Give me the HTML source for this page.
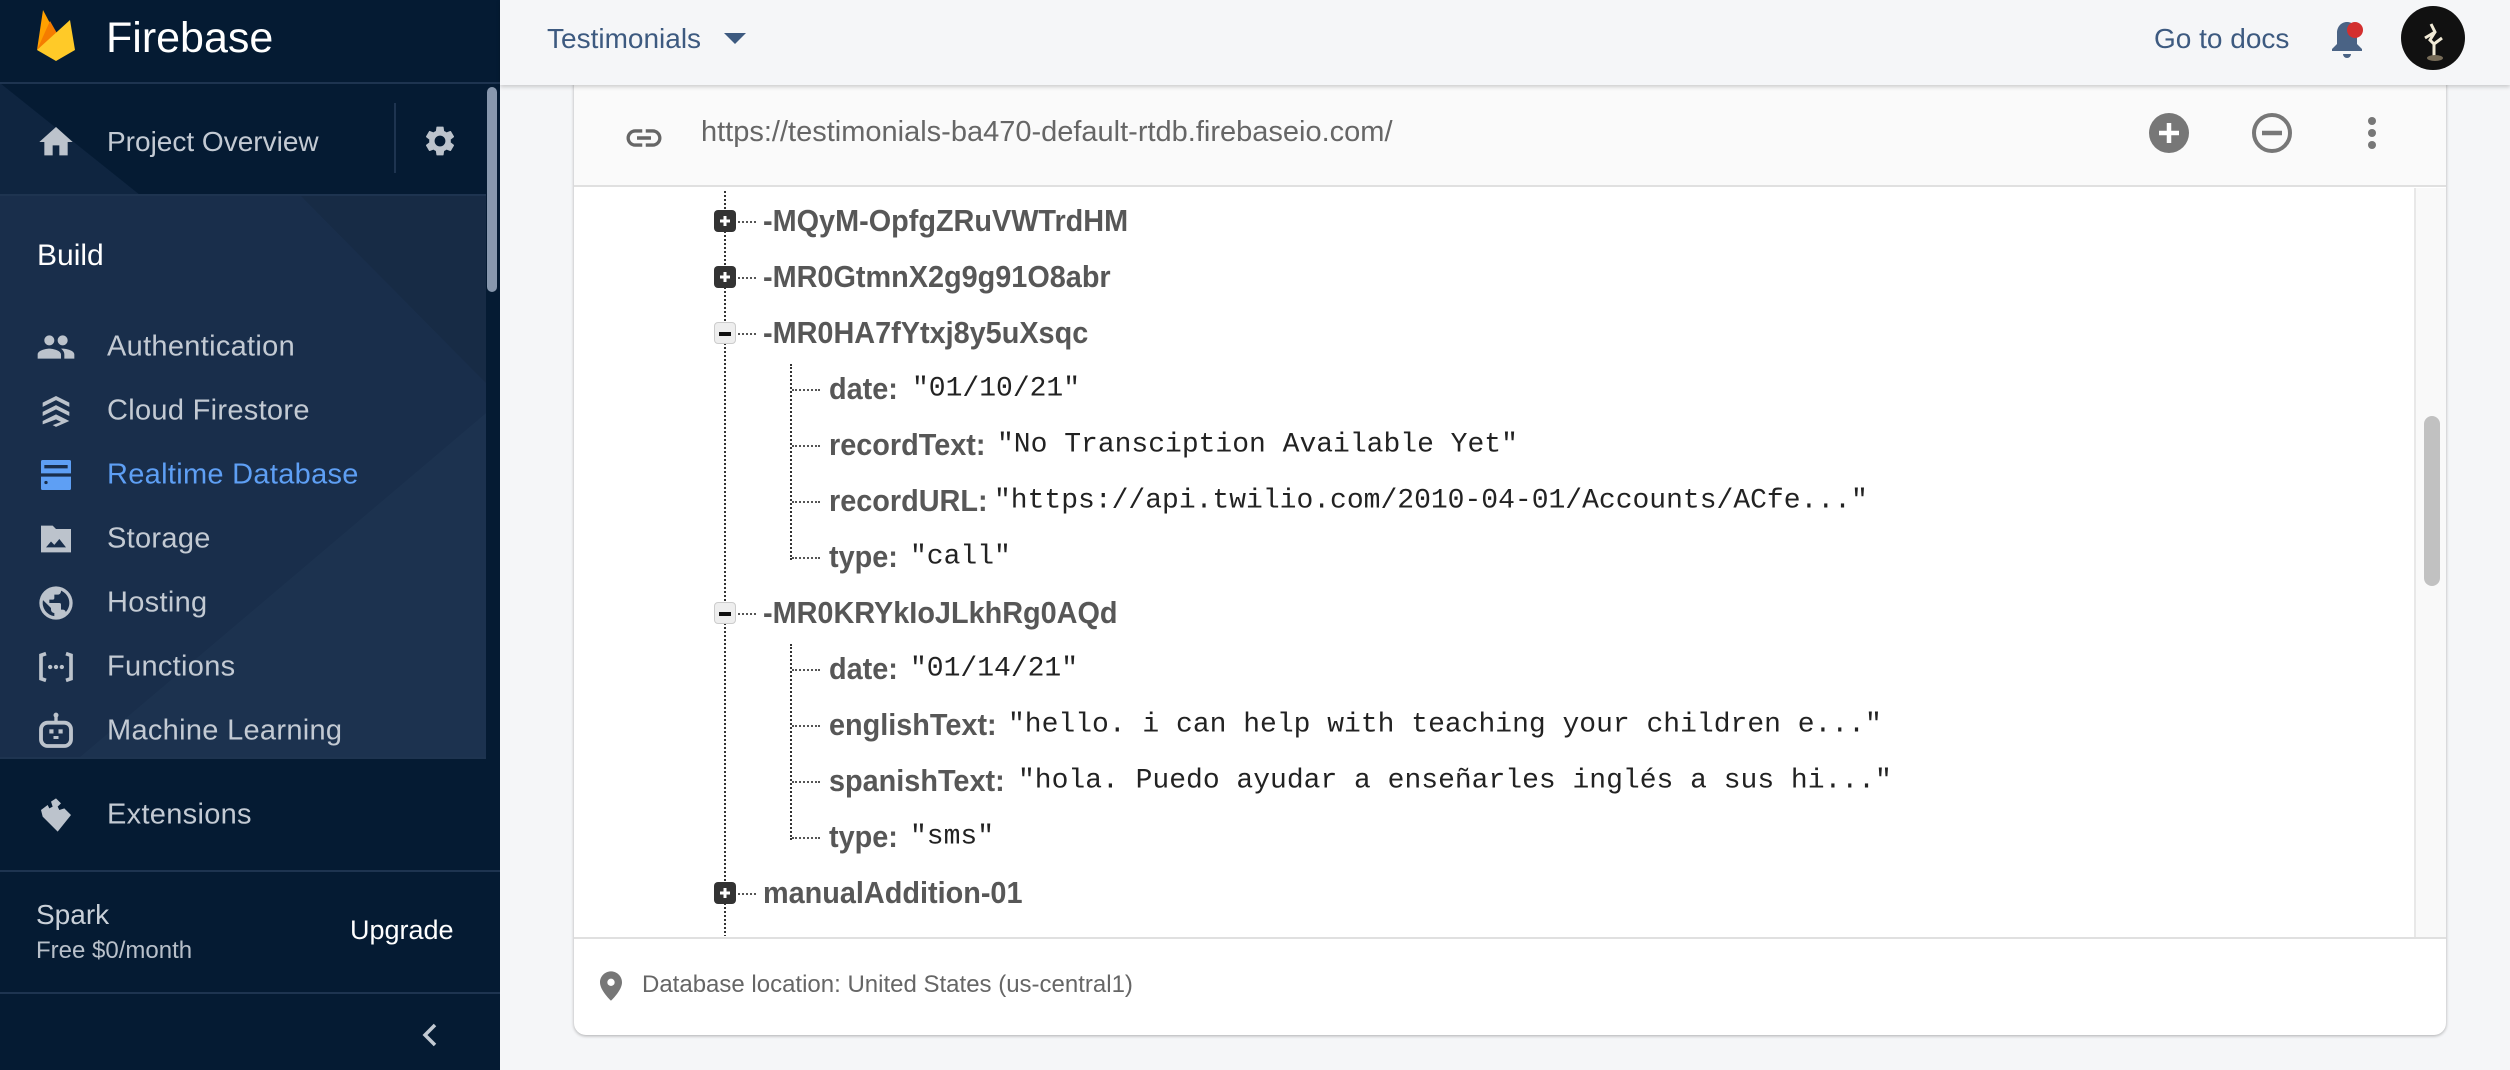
<!DOCTYPE html>
<html><head><meta charset="utf-8">
<style>
*{margin:0;padding:0;box-sizing:border-box}
body{width:2510px;height:1070px;overflow:hidden;background:#f5f6f8;font-family:"Liberation Sans",sans-serif;position:relative}
.abs{position:absolute}
#side{left:0;top:0;width:500px;height:1070px;background:#051b33;overflow:hidden}
.nav{position:absolute;left:107px;font-size:29px;color:#c3cad3;transform:translateY(-50%);white-space:nowrap;letter-spacing:0.3px}
.ic{position:absolute;left:36px;width:40px;height:40px;transform:translateY(-50%)}
.hl{position:absolute;left:0;height:2px;background:#1e3450}
.key{position:absolute;font-weight:bold;font-size:31px;color:#575757;transform:translateY(-50%) scaleX(0.93);transform-origin:left center;white-space:nowrap}
.val{position:absolute;font-family:"Liberation Mono",monospace;font-size:28px;color:#222;transform:translateY(-50%);white-space:pre}
.box{position:absolute;width:22px;height:22px;border-radius:4px;transform:translate(-50%,-50%)}
.plus{background:#333}
.minus{background:#eee;border:1.5px solid #ccc}
.hd{position:absolute;border-top:2px dotted #555;height:0}
.vd{position:absolute;border-left:2px dotted #333;width:0}
</style></head><body>

<div id="side" class="abs">
  <svg class="abs" style="left:0;top:83px" width="486" height="674">
    <rect x="0" y="112" width="486" height="562" fill="#172b45"/>
    <polygon points="0,0 0,0 140,112 0,112" fill="#0f2540"/>
    <polygon points="0,112 300,112 486,300 486,674 0,674" fill="#1c3250" opacity="0.55"/>
    <polygon points="486,330 486,674 80,674" fill="#1e3552" opacity="0.6"/>
  </svg>
  <div class="hl" style="top:82px;width:500px"></div>
  <div class="hl" style="top:194px;width:486px"></div>
  <div class="hl" style="top:757px;width:486px"></div>
  <div class="hl" style="top:870px;width:500px"></div>
  <div class="hl" style="top:992px;width:500px"></div>
  <svg class="abs" style="left:36px;top:10px" width="40" height="52" viewBox="0 0 40 52">
    <path d="M1 40 L7 0 L16 17 Z" fill="#ffa000"/>
    <path d="M1 40 L14 11 L22 25 Z" fill="#f57c00"/>
    <path d="M1 40 L34 10 L39 40 L20 51 Z" fill="#ffca28"/>
  </svg>
  <div class="abs" style="left:106px;top:14px;font-size:43px;color:#fff">Firebase</div>
  <svg class="ic" style="top:142px" viewBox="0 0 24 24"><path d="M10 20v-6h4v6h5v-8h3L12 3 2 12h3v8z" fill="#bcc3cc"/></svg>
  <div class="nav" style="top:142px;font-size:28px;letter-spacing:0">Project Overview</div>
  <div class="abs" style="left:394px;top:103px;width:2px;height:70px;background:#1e3450"></div>
  <svg class="abs" style="left:422px;top:123px" width="36" height="36" viewBox="0 0 24 24"><path fill="#bcc3cc" d="M19.14 12.94c.04-.3.06-.61.06-.94 0-.32-.02-.64-.07-.94l2.03-1.58a.49.49 0 0 0 .12-.61l-1.920-3.32a.49.49 0 0 0-.59-.22l-2.39.96c-.5-.38-1.03-.7-1.62-.94l-.36-2.54a.48.48 0 0 0-.48-.41h-3.84c-.24 0-.43.17-.47.41l-.36 2.54c-.59.24-1.13.57-1.62.94l-2.39-.96a.48.48 0 0 0-.59.22L2.74 8.87c-.12.21-.08.47.12.61l2.03 1.58c-.05.3-.09.63-.09.94s.02.64.07.94l-2.03 1.58a.49.49 0 0 0-.12.61l1.92 3.32c.12.22.37.29.59.22l2.39-.96c.5.38 1.030.7 1.62.94l.36 2.54c.05.24.24.41.48.41h3.84c.24 0 .44-.17.47-.41l.36-2.54c.59-.24 1.13-.56 1.62-.94l2.39.96c.22.08.47 0 .59-.22l1.92-3.32c.12-.22.07-.47-.12-.61l-2.01-1.58zM12 15.6A3.6 3.6 0 1 1 12 8.4a3.6 3.6 0 0 1 0 7.2z"/></svg>
  <div class="abs" style="left:487px;top:87px;width:10px;height:205px;border-radius:5px;background:#8797ad"></div>
  <div class="abs" style="left:37px;top:239px;font-size:30px;color:#fff">Build</div>
  <svg class="ic" style="top:347px" viewBox="0 0 24 24"><path fill="#bcc3cc" d="M16 11c1.66 0 2.99-1.34 2.99-3S17.66 5 16 5s-3 1.34-3 3 1.34 3 3 3zm-8 0c1.66 0 2.99-1.34 2.99-3S9.66 5 8 5 5 6.34 5 8s1.34 3 3 3zm0 2c-2.33 0-7 1.17-7 3.5V19h14v-2.5c0-2.33-4.67-3.5-7-3.5zm8 0c-.29 0-.62.02-.97.05 1.160.84 1.97 1.97 1.97 3.45V19h6v-2.5c0-2.33-4.67-3.5-7-3.5z"/></svg>
  <div class="nav" style="top:347px">Authentication</div>
  <svg class="ic" style="top:411px" viewBox="0 0 24 24"><path fill="#bcc3cc" d="M12 3l8 4v2.5l-8-4-8 4V7zM12 8.5l8 4V15l-8-4-8 4v-2.5zM4 18l8-4 8 4-8 3.5-2-1 5-2-3-1.5L4 20z"/></svg>
  <div class="nav" style="top:411px">Cloud Firestore</div>
  <svg class="ic" style="top:475px" viewBox="0 0 24 24"><path fill="#5e9ff4" d="M4 3h16a1 1 0 0 1 1 1v7H3V4a1 1 0 0 1 1-1zm1 3v2h14V6zM3 13h18v7a1 1 0 0 1-1 1H4a1 1 0 0 1-1-1zm3 2.5a1 1 0 1 0 0 2 1 1 0 0 0 0-2z"/></svg>
  <div class="nav" style="top:475px;color:#5e9ff4">Realtime Database</div>
  <svg class="ic" style="top:539px" viewBox="0 0 24 24"><path fill="#bcc3cc" d="M3 4h7l2 2h9v14H3zM6 17h12l-4-5-3 3.5-2-2z"/></svg>
  <div class="nav" style="top:539px">Storage</div>
  <svg class="ic" style="top:603px" viewBox="0 0 24 24"><path fill="#bcc3cc" d="M12 2a10 10 0 1 0 0 20 10 10 0 0 0 0-20zm-1 17.9A8 8 0 0 1 4.2 10.3L9 15v1a2 2 0 0 0 2 2zm6.9-2.5A2 2 0 0 0 16 16h-1v-3a1 1 0 0 0-1-1H8v-2h2a1 1 0 0 0 1-1V7h2a2 2 0 0 0 2-2v-.4a8 8 0 0 1 2.9 12.8z"/></svg>
  <div class="nav" style="top:603px">Hosting</div>
  <svg class="ic" style="top:667px" viewBox="0 0 24 24"><path fill="none" stroke="#bcc3cc" stroke-width="2.2" d="M6 4L3 5v14l3 1M18 4l3 1v14l-3 1"/><circle cx="8.5" cy="12" r="1.3" fill="#bcc3cc"/><circle cx="12" cy="12" r="1.3" fill="#bcc3cc"/><circle cx="15.5" cy="12" r="1.3" fill="#bcc3cc"/></svg>
  <div class="nav" style="top:667px">Functions</div>
  <svg class="ic" style="top:731px" viewBox="0 0 24 24"><rect x="3" y="7" width="18" height="14" rx="4" fill="none" stroke="#bcc3cc" stroke-width="2.3"/><path d="M12 2v5" stroke="#bcc3cc" stroke-width="2"/><circle cx="12" cy="2.5" r="1.5" fill="#bcc3cc"/><rect x="8" y="11" width="2.5" height="2.5" fill="#bcc3cc"/><rect x="13.5" y="11" width="2.5" height="2.5" fill="#bcc3cc"/><rect x="10.5" y="15" width="3" height="1.8" fill="#bcc3cc"/></svg>
  <div class="nav" style="top:731px">Machine Learning</div>
  <svg class="ic" style="top:815px" viewBox="0 0 24 24"><path fill="#bcc3cc" d="M3 9l4-3 1 2 2-1-1-3 3-2 3 3-2 2 1 2 3-1 4 4-8 10-9-9z"/></svg>
  <div class="nav" style="top:815px">Extensions</div>
  <div class="abs" style="left:36px;top:899px;font-size:28px;color:#c9d0d8">Spark</div>
  <div class="abs" style="left:36px;top:937px;font-size:24px;color:#b8c0ca">Free $0/month</div>
  <div class="abs" style="left:350px;top:915px;font-size:27px;color:#fff">Upgrade</div>
  <svg class="abs" style="left:418px;top:1021px" width="24" height="28" viewBox="0 0 24 28"><path d="M17 4L7 14l10 10" fill="none" stroke="#c3cad3" stroke-width="3.5"/></svg>
</div>

<div class="abs" style="left:500px;top:0;width:2010px;height:85px;background:#f5f6f8;box-shadow:0 2px 4px rgba(0,0,0,.18);z-index:3"></div>
<div class="abs" style="left:547px;top:23px;font-size:28px;color:#3d5a80;z-index:4">Testimonials</div>
<svg class="abs" style="left:724px;top:33px;z-index:4" width="22" height="12"><path d="M0 0h22L11 11z" fill="#3d5a80"/></svg>
<div class="abs" style="left:2154px;top:23px;font-size:28px;color:#3d5a80;z-index:4">Go to docs</div>
<svg class="abs" style="left:2327px;top:19px;z-index:4" width="40" height="42" viewBox="0 0 40 42"><path d="M20 3c-6 0-10 5-10 11v11l-5 5v2h30v-2l-5-5V14c0-6-4-11-10-11z" fill="#4a6385"/><path d="M16 35h8a4 4 0 0 1-8 0z" fill="#4a6385"/><circle cx="28" cy="11" r="8" fill="#d32f2f"/></svg>
<svg class="abs" style="left:2401px;top:6px;z-index:4" width="64" height="64"><circle cx="32" cy="32" r="32" fill="#111"/><path d="M30 18l4 8-5 8 4 4 8-6M34 26l-10 6M33 38v12" stroke="#f1ead6" stroke-width="3" fill="none"/><ellipse cx="34" cy="52" rx="8" ry="3" fill="#776c58"/></svg>

<div class="abs" style="left:574px;top:60px;width:1872px;height:975px;background:#fff;border-radius:0 0 12px 12px;box-shadow:0 1px 3px rgba(0,0,0,.3);overflow:hidden">
  <div class="abs" style="left:0;top:25px;width:1872px;height:102px;background:#fafafa;border-bottom:2px solid #e0e0e0"></div>
  <svg class="abs" style="left:49px;top:57px" width="42" height="42" viewBox="0 0 24 24"><path fill="#666" d="M3.9 12c0-1.71 1.39-3.1 3.1-3.1h4V7H7c-2.76 0-5 2.24-5 5s2.24 5 5 5h4v-1.9H7c-1.71 0-3.1-1.39-3.1-3.1zM8 13h8v-2H8zm9-6h-4v1.9h4c1.71 0 3.1 1.39 3.1 3.1s-1.39 3.1-3.1 3.1h-4V17h4c2.76 0 5-2.240 5-5s-2.24-5-5-5z"/></svg>
  <div class="abs" style="left:127px;top:56px;font-size:29px;color:#666;white-space:nowrap">https://testimonials-ba470-default-rtdb.firebaseio.com/</div>
  <svg class="abs" style="left:1574px;top:52px" width="42" height="42" viewBox="0 0 42 42"><circle cx="21" cy="21" r="20" fill="#777"/><path d="M21 11v20M11 21h20" stroke="#fff" stroke-width="4.5"/></svg>
  <svg class="abs" style="left:1677px;top:52px" width="42" height="42" viewBox="0 0 42 42"><circle cx="21" cy="21" r="18" fill="none" stroke="#777" stroke-width="4"/><path d="M11 21h20" stroke="#777" stroke-width="4.5"/></svg>
  <svg class="abs" style="left:1792px;top:57px" width="12" height="34"><circle cx="6" cy="4" r="4" fill="#777"/><circle cx="6" cy="16" r="4" fill="#777"/><circle cx="6" cy="28" r="4" fill="#777"/></svg>
  <div class="abs" style="left:1840px;top:128px;width:32px;height:750px;background:#f9f9f9;border-left:2px solid #e8e8e8"></div>
  <div class="abs" style="left:1850px;top:356px;width:16px;height:170px;background:#c1c1c1;border-radius:8px"></div>
  <div class="abs" style="left:0;top:877px;width:1872px;height:2px;background:#e0e0e0"></div>
  <svg class="abs" style="left:26px;top:911px" width="22" height="30" viewBox="0 0 24 32"><path d="M12 0C5.4 0 0 5.4 0 12c0 9 12 20 12 20s12-11 12-20C24 5.4 18.6 0 12 0zm0 16a4 4 0 1 1 0-8 4 4 0 0 1 0 8z" fill="#777"/></svg>
  <div class="abs" style="left:68px;top:911px;font-size:24px;color:#666;white-space:nowrap">Database location: United States (us-central1)</div>
</div>

<div class="abs" style="left:574px;top:189px;width:1836px;height:747px;overflow:hidden">
  <div style="position:absolute;left:-574px;top:-187px;width:2510px;height:1100px">
    <div class="vd" style="left:724px;top:185px;height:770px"></div>
    <div class="vd" style="left:790px;top:362px;height:196px"></div>
    <div class="vd" style="left:790px;top:642px;height:196px"></div>

    <div class="hd" style="left:734px;top:219px;width:22px"></div><div class="box plus" style="left:725px;top:219px"></div>
    <svg class="abs" style="left:718px;top:212px" width="14" height="14"><path d="M7 2v10M2 7h10" stroke="#fff" stroke-width="3"/></svg>
    <div class="key" style="left:763px;top:219px">-MQyM-OpfgZRuVWTrdHM</div>

    <div class="hd" style="left:734px;top:275px;width:22px"></div><div class="box plus" style="left:725px;top:275px"></div>
    <svg class="abs" style="left:718px;top:268px" width="14" height="14"><path d="M7 2v10M2 7h10" stroke="#fff" stroke-width="3"/></svg>
    <div class="key" style="left:763px;top:275px">-MR0GtmnX2g9g91O8abr</div>

    <div class="hd" style="left:734px;top:331px;width:22px"></div><div class="box minus" style="left:725px;top:331px"></div>
    <div class="abs" style="left:719px;top:330px;width:12px;height:4px;background:#111"></div>
    <div class="key" style="left:763px;top:331px">-MR0HA7fYtxj8y5uXsqc</div>

    <div class="hd" style="left:792px;top:387px;width:28px"></div>
    <div class="key" style="left:829px;top:387px">date:</div><div class="val" style="left:912px;top:387px">"01/10/21"</div>
    <div class="hd" style="left:792px;top:443px;width:28px"></div>
    <div class="key" style="left:829px;top:443px">recordText:</div><div class="val" style="left:997px;top:443px">"No Transciption Available Yet"</div>
    <div class="hd" style="left:792px;top:499px;width:28px"></div>
    <div class="key" style="left:829px;top:499px">recordURL:</div><div class="val" style="left:994px;top:499px">"https://api.twilio.com/2010-04-01/Accounts/ACfe..."</div>
    <div class="hd" style="left:792px;top:555px;width:28px"></div>
    <div class="key" style="left:829px;top:555px">type:</div><div class="val" style="left:910px;top:555px">"call"</div>

    <div class="hd" style="left:734px;top:611px;width:22px"></div><div class="box minus" style="left:725px;top:611px"></div>
    <div class="abs" style="left:719px;top:610px;width:12px;height:4px;background:#111"></div>
    <div class="key" style="left:763px;top:611px">-MR0KRYkIoJLkhRg0AQd</div>

    <div class="hd" style="left:792px;top:667px;width:28px"></div>
    <div class="key" style="left:829px;top:667px">date:</div><div class="val" style="left:910px;top:667px">"01/14/21"</div>
    <div class="hd" style="left:792px;top:723px;width:28px"></div>
    <div class="key" style="left:829px;top:723px">englishText:</div><div class="val" style="left:1008px;top:723px">"hello. i can help with teaching your children e..."</div>
    <div class="hd" style="left:792px;top:779px;width:28px"></div>
    <div class="key" style="left:829px;top:779px">spanishText:</div><div class="val" style="left:1018px;top:779px">"hola. Puedo ayudar a enseñarles inglés a sus hi..."</div>
    <div class="hd" style="left:792px;top:835px;width:28px"></div>
    <div class="key" style="left:829px;top:835px">type:</div><div class="val" style="left:910px;top:835px">"sms"</div>

    <div class="hd" style="left:734px;top:891px;width:22px"></div><div class="box plus" style="left:725px;top:891px"></div>
    <svg class="abs" style="left:718px;top:884px" width="14" height="14"><path d="M7 2v10M2 7h10" stroke="#fff" stroke-width="3"/></svg>
    <div class="key" style="left:763px;top:891px">manualAddition-01</div>

    <div class="box minus" style="left:725px;top:947px"></div>
    <div class="key" style="left:763px;top:947px">manualAddition-02</div>
  </div>
</div>
</body></html>
